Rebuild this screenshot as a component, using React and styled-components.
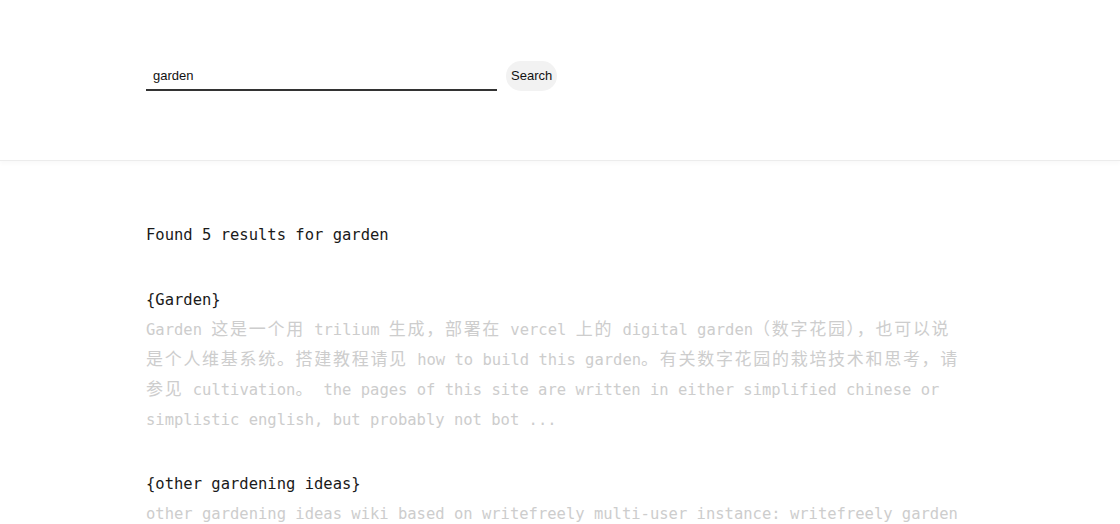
import React from 'react';
import styled, { createGlobalStyle } from 'styled-components';

const GlobalStyle = createGlobalStyle`
    html, body {
        margin: 0;
        padding: 0;
        background: #fff;
    }
    body {
        font-family: "DejaVu Sans Mono", "Noto Sans CJK SC", monospace;
    }
`;

const Header = styled.header`
    height: 161px;
    border-bottom: 1px solid #ececec;
    box-shadow: 0 3px 4px rgba(0, 0, 0, 0.025);
    box-sizing: border-box;
    padding-top: 61px;
`;

const SearchForm = styled.form`
    max-width: 828px;
    margin: 0 auto;
    display: flex;
    align-items: center;
    gap: 9px;
`;

const SearchInput = styled.input`
    width: 351px;
    height: 30px;
    box-sizing: border-box;
    border: none;
    border-bottom: 2px solid #333;
    padding: 0 7px;
    font-family: "Liberation Sans", Arial, sans-serif;
    font-size: 13px;
    color: #111;
    outline: none;
    background: transparent;
`;

const SearchButton = styled.button`
    height: 30px;
    padding: 0 5px;
    border: none;
    border-radius: 15px;
    background: #f2f2f2;
    font-family: "Liberation Sans", Arial, sans-serif;
    font-size: 13px;
    color: #111;
    margin-top: -1px;
`;

const Main = styled.main`
    max-width: 828px;
    margin: 0 auto;
    padding-top: 59px;
    font-size: 15.5px;
    line-height: 30px;
`;

const Summary = styled.p`
    margin: 0 0 35px;
    color: #1a1a1a;
`;

const ResultList = styled.ul`
    list-style: none;
    margin: 0;
    padding: 0;
`;

const Result = styled.li`
    margin-bottom: 34px;
`;

const ResultTitle = styled.h2`
    margin: 0;
    font-size: 15.5px;
    font-weight: normal;
    line-height: 30px;
    color: #1a1a1a;
`;

const ResultText = styled.p`
    margin: 0;
    padding-right: 12px;
    color: #cdcdcd;
`;

const Cjk = styled.span`
    font-family: "Noto Sans CJK SC", sans-serif;
    font-size: 17px;
    line-height: 17px;
    letter-spacing: 1.7px;
`;

const results = [
    {
        title: '{Garden}',
        text: 'Garden 这是一个用 trilium 生成，部署在 vercel 上的 digital garden（数字花园），也可以说是个人维基系统。搭建教程请见 how to build this garden。有关数字花园的栽培技术和思考，请参见 cultivation。 the pages of this site are written in either simplified chinese or simplistic english, but probably not bot ...'
    },
    {
        title: '{other gardening ideas}',
        text: 'other gardening ideas wiki based on writefreely multi-user instance: writefreely garden ...'
    }
];

// wrap the chinese runs so they take two mono cells each
const renderMixed = (text) =>
    text.split(/([\u3000-\u303f\u4e00-\u9fff\uff00-\uffef]+)/).map((part, i) =>
        /[\u3000-\u303f\u4e00-\u9fff\uff00-\uffef]/.test(part)
            ? <Cjk key={i}>{part}</Cjk>
            : part
    );

export default function App() {
    const query = 'garden';
    return (
        <>
            <GlobalStyle />
            <Header>
                <SearchForm onSubmit={e => e.preventDefault()}>
                    <SearchInput defaultValue={query} />
                    <SearchButton type="submit">Search</SearchButton>
                </SearchForm>
            </Header>
            <Main>
                <Summary>Found 5 results for {query}</Summary>
                <ResultList>
                    {results.map((r, i) => (
                        <Result key={i}>
                            <ResultTitle>{r.title}</ResultTitle>
                            <ResultText>{renderMixed(r.text)}</ResultText>
                        </Result>
                    ))}
                </ResultList>
            </Main>
        </>
    );
}
